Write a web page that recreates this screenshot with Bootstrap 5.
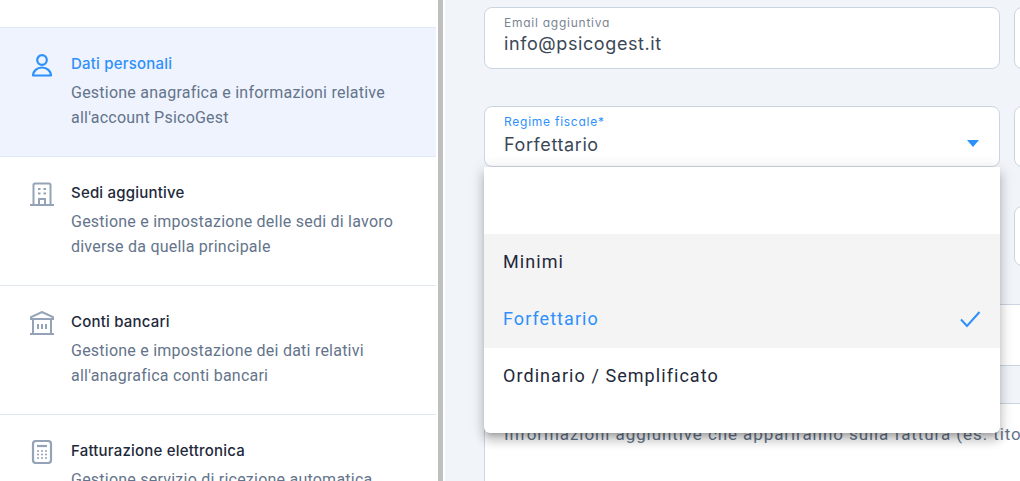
<!doctype html>
<html lang="it">
<head>
<meta charset="utf-8">
<title>Impostazioni</title>
<link href="https://cdn.jsdelivr.net/npm/bootstrap@5.3.0/dist/css/bootstrap.min.css" rel="stylesheet">
<style>
html,body{height:481px;overflow:hidden;background:#f1f5f9;}
.shell{height:481px;overflow:hidden;}
.side{width:438px;flex:none;background:#fff;padding-top:27px;}
.side .list-group-item{height:129px;width:436px;padding:26px 20px 0 30px;border-color:#e2e8f0;border-width:1px 0 0;background:transparent;font-family:Inter,sans-serif;}
.side .list-group-item.on{background:#eef3fe;}
.side-ico{width:24px;height:24px;flex:none;margin-right:17px;margin-top:-1px;}
.side-ico svg{display:block;}
.item-head{font-size:15px;font-weight:500;color:#1e293b;line-height:20px;margin-bottom:6px;letter-spacing:.2px;}
.on .item-head{color:#2e90fa;}
.item-desc{font-family:Roboto,sans-serif;font-size:16px;line-height:25.4px;color:#64748b;letter-spacing:.23px;white-space:nowrap;}
.bar-track{width:7px;flex:none;background:#fff;}
.bar-track i{display:block;width:5px;height:100%;background:#bfbfbf;}
.main-area{flex:1 0 auto;width:575px;padding-left:39px;position:relative;}
.frow{display:flex;gap:14px;width:600px;}
.fbox{flex:none;width:516px;background:#fff;border:1px solid #cbd5e1;border-radius:8px;padding:6px 19px 0;font-family:Inter,sans-serif;position:relative;}
.fbox.other{width:60px;}
.r1{margin-top:7px;height:62px;}
.r2{margin-top:37px;height:61px;}
.r3{margin-top:39px;height:60px;}
.flabel{font-size:12px;line-height:18px;letter-spacing:.75px;color:#7b8494;font-feature-settings:"cv11";}
.flabel.act{color:#2e90fa;}
.fval{font-size:18px;line-height:24px;letter-spacing:.6px;color:#3b4757;}
.r2 .fval{margin-top:2px;}
.caret{position:absolute;right:20px;top:33px;width:0;height:0;border-left:6px solid transparent;border-right:6px solid transparent;border-top:7px solid #2e90fa;}
.band{margin-top:38px;width:560px;border-top:1px solid #cbd5e1;height:61px;background:#fff;}
.band2{width:560px;border-top:1px solid #cbd5e1;height:38px;background:#f1f5f9;}
.tarea{width:536px;height:90px;background:#fff;border:solid #cbd5e1;border-width:1px 0 0 1px;padding:18px 0 0 19px;font-family:Roboto,sans-serif;font-size:17px;letter-spacing:.92px;color:#64748b;white-space:nowrap;overflow:hidden;}
.drop{position:absolute;left:39px;top:167px;width:516px;height:266px;background:#fff;padding:67px 0 0;border-radius:0 0 6px 6px;box-shadow:0 5px 5px -3px rgba(0,0,0,.2),0 8px 10px 1px rgba(0,0,0,.14),0 3px 14px 2px rgba(0,0,0,.12);font-family:Roboto,sans-serif;z-index:5;}
.opt{height:57px;display:flex;align-items:center;justify-content:space-between;padding:0 19px 2px;font-size:18px;letter-spacing:1.06px;color:#1e293b;}
.opt.hi{background:#f4f4f4;}
.opt.sel{color:#2e90fa;}
</style>
</head>
<body>
<div class="shell d-flex">
  <aside class="side">
    <div class="list-group list-group-flush">
      <div class="list-group-item on d-flex">
        <span class="side-ico"><svg width="24" height="24" viewBox="0 0 24 24" fill="none" stroke="#2e90fa" stroke-width="2.2"><circle cx="12" cy="7" r="4.800"/><path d="M3 22.500a9 8 0 0 1 18 0z" stroke-linejoin="round"/></svg></span>
        <div><div class="item-head">Dati personali</div><div class="item-desc">Gestione anagrafica e informazioni relative<br>all'account PsicoGest</div></div>
      </div>
      <div class="list-group-item d-flex">
        <span class="side-ico"><svg width="24" height="24" viewBox="0 0 24 24" fill="none" stroke="#94a3b8" stroke-width="2"><path d="M0 23h24M3.500 23V3A1.500 1.500 0 0 1 5 1.500h14A1.500 1.500 0 0 1 20.500 3v20M9 23v-6h6v6"/><path d="M8 7h2.500M13.500 7H16M8 11.500h2.500M13.500 11.500H16"/></svg></span>
        <div><div class="item-head">Sedi aggiuntive</div><div class="item-desc">Gestione e impostazione delle sedi di lavoro<br>diverse da quella principale</div></div>
      </div>
      <div class="list-group-item d-flex">
        <span class="side-ico"><svg width="24" height="24" viewBox="0 0 24 24" fill="none" stroke="#94a3b8" stroke-width="2"><path d="M0 6.500 12 1l12 5.500M0 8h24M3 8v15M21 8v15M0 23h24"/><path d="M8 13v5M12 13v5M16 13v5"/></svg></span>
        <div><div class="item-head">Conti bancari</div><div class="item-desc">Gestione e impostazione dei dati relativi<br>all'anagrafica conti bancari</div></div>
      </div>
      <div class="list-group-item d-flex">
        <span class="side-ico"><svg width="24" height="24" viewBox="0 0 24 24" fill="none" stroke="#94a3b8" stroke-width="2.2"><rect x="3" y="1" width="18" height="22" rx="3"/><path d="M7 6h10"/><path d="M7 11h2M11 11h2M15 11h2M7 14.500h2M11 14.500h2M15 14.500h2M7 18h2M11 18h2M15 18h2" stroke-width="1.500"/></svg></span>
        <div><div class="item-head">Fatturazione elettronica</div><div class="item-desc">Gestione servizio di ricezione automatica</div></div>
      </div>
    </div>
  </aside>
  <div class="bar-track"><i></i></div>
  <main class="main-area">
    <div class="frow r1"><div class="fbox"><div class="flabel">Email aggiuntiva</div><div class="fval">info@psicogest.it</div></div><div class="fbox other"></div></div>
    <div class="frow r2"><div class="fbox"><div class="flabel act">Regime fiscale*</div><div class="fval">Forfettario</div><span class="caret"></span></div><div class="fbox other"></div></div>
    <div class="frow r3"><div class="fbox"></div><div class="fbox other"></div></div>
    <div class="band"></div>
    <div class="band2"></div>
    <div class="tarea">Informazioni aggiuntive che appariranno sulla fattura (es. tito</div>
    <div class="drop">
      <div class="opt hi">Minimi</div>
      <div class="opt hi sel">Forfettario<svg width="22" height="18" viewBox="0 0 22 18" fill="none" stroke="#2e90fa" stroke-width="2"><path d="M2 9.500 8 16 20.500 2"/></svg></div>
      <div class="opt">Ordinario / Semplificato</div>
    </div>
  </main>
</div>
<script src="https://cdn.jsdelivr.net/npm/bootstrap@5.3.0/dist/js/bootstrap.bundle.min.js"></script>
</body>
</html>
